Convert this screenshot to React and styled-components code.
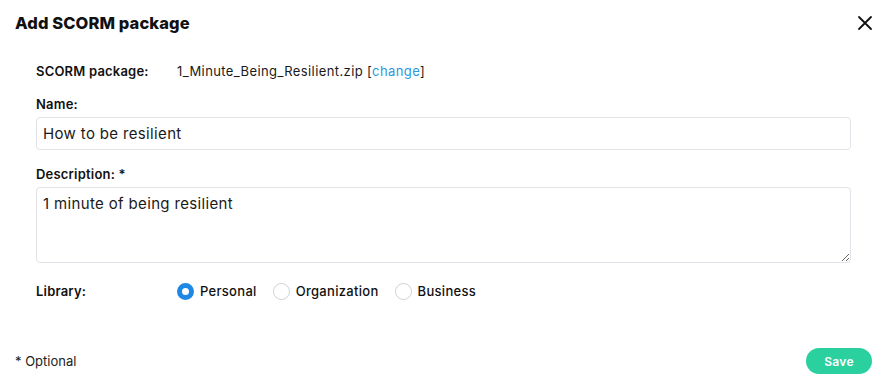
import React from 'react'
import styled, { createGlobalStyle } from 'styled-components'

const GlobalStyle = createGlobalStyle`
  html, body {
    margin: 0;
    padding: 0;
    background: #fff;
  }
  body {
    font-family: Inter, "Noto Sans", "Liberation Sans", sans-serif;
    color: #1a1a1a;
  }
`

const Modal = styled.div`
  box-sizing: border-box;
  width: 890px;
  height: 389px;
  display: flex;
  flex-direction: column;
  background: #fff;
`

const Header = styled.div`
  display: flex;
  align-items: center;
  justify-content: space-between;
  padding: 12px 16px 0 15px;
  height: 22px;

  h1 {
    margin: 0;
    font-size: 16.5px;
    font-weight: 800;
    letter-spacing: 0.1px;
    color: #111;
  }
`

const CloseButton = styled.button`
  border: none;
  background: none;
  padding: 0;
  width: 18px;
  height: 18px;
  display: flex;
  align-items: center;
  justify-content: center;
  cursor: pointer;
`

const Body = styled.div`
  flex: 1;
  padding: 26px 39px 0 36px;
  display: flex;
  flex-direction: column;
`

const Row = styled.div`
  display: flex;
  align-items: center;
  min-height: 22px;
  margin-bottom: ${p => p.$gap || 0}px;
`

const Label = styled.div`
  font-size: 13px;
  font-weight: 600;
  letter-spacing: 0.2px;
  color: #111;
  width: ${p => (p.$inline ? '141px' : 'auto')};
  flex-shrink: 0;
  margin-bottom: ${p => (p.$inline ? 0 : 5)}px;
`

const Value = styled.div`
  font-size: 13px;
  letter-spacing: 0.4px;
  color: #1a1a1a;

  a {
    color: #2b98e0;
    text-decoration: none;
  }
`

const Field = styled.div`
  display: flex;
  flex-direction: column;
  margin-bottom: ${p => p.$gap || 0}px;
`

const TextInput = styled.input`
  box-sizing: border-box;
  height: 33px;
  width: 100%;
  border: 1px solid #e2e2e8;
  border-radius: 4px;
  padding: 0 6px;
  font-family: inherit;
  font-size: 15px;
  letter-spacing: 0.35px;
  color: #1a1a1a;
  outline: none;
`

const TextArea = styled.textarea`
  box-sizing: border-box;
  height: 76px;
  width: 100%;
  border: 1px solid #e2e2e8;
  border-radius: 4px;
  padding: 6px 6px;
  font-family: inherit;
  font-size: 15px;
  letter-spacing: 0.35px;
  color: #1a1a1a;
  outline: none;
  resize: vertical;
  display: block;
`

const RadioGroup = styled.div`
  display: flex;
  align-items: center;
  gap: 16px;
`

const RadioOption = styled.label`
  display: flex;
  align-items: center;
  gap: 6px;
  font-size: 13px;
  font-weight: 500;
  letter-spacing: 0.3px;
  color: #111;
  cursor: pointer;
`

const RadioCircle = styled.span`
  box-sizing: border-box;
  width: 17px;
  height: 17px;
  border-radius: 50%;
  background: #fff;
  border: ${p => (p.$checked ? '5px solid #1e88e5' : '1px solid #cfd0d8')};
`

const Footer = styled.div`
  display: flex;
  align-items: center;
  justify-content: space-between;
  padding: 0 18px 15px 15px;
`

const Hint = styled.div`
  font-size: 13px;
  color: #222;
`

const SaveButton = styled.button`
  width: 66px;
  height: 26px;
  border: none;
  border-radius: 13px;
  background: #2bd09f;
  color: #fff;
  font-family: inherit;
  font-size: 12px;
  font-weight: 600;
  letter-spacing: 0.3px;
  cursor: pointer;
`

const libraries = ['Personal', 'Organization', 'Business']

export default function App() {
  const [library, setLibrary] = React.useState('Personal')

  return (
    <>
      <GlobalStyle />
      <Modal>
        <Header>
          <h1>Add SCORM package</h1>
          <CloseButton aria-label="Close">
            <svg width="16" height="16" viewBox="0 0 16 16">
              <path d="M2 2 L14 14 M14 2 L2 14" stroke="#111" strokeWidth="1.8" strokeLinecap="round" />
            </svg>
          </CloseButton>
        </Header>
        <Body>
          <Row $gap={14}>
            <Label $inline>SCORM package:</Label>
            <Value>
              1_Minute_Being_Resilient.zip [<a href="#">change</a>]
            </Value>
          </Row>
          <Field $gap={16}>
            <Label>Name:</Label>
            <TextInput defaultValue="How to be resilient" />
          </Field>
          <Field $gap={17}>
            <Label>Description: *</Label>
            <TextArea defaultValue="1 minute of being resilient" />
          </Field>
          <Row>
            <Label $inline>Library:</Label>
            <RadioGroup>
              {libraries.map(l => (
                <RadioOption key={l} onClick={() => setLibrary(l)}>
                  <RadioCircle $checked={library === l} />
                  {l}
                </RadioOption>
              ))}
            </RadioGroup>
          </Row>
        </Body>
        <Footer>
          <Hint>* Optional</Hint>
          <SaveButton>Save</SaveButton>
        </Footer>
      </Modal>
    </>
  )
}
